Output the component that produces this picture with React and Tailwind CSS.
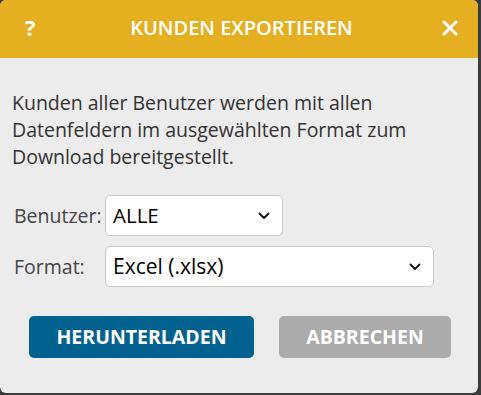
import React from 'react'

function Chevron(){
  return (
    <svg width="12" height="8" viewBox="0 0 12 8" className="pointer-events-none absolute right-[12px] top-1/2 -translate-y-1/2">
      <path d="M1.5 1.5 L6 6 L10.5 1.5" fill="none" stroke="#111" strokeWidth="1.8" strokeLinecap="round" strokeLinejoin="round" />
    </svg>
  )
}

function SelectBox({value, width, size}){
  return (
    <div className={`relative h-[41px] rounded-[5px] border border-[#c9c9c9] bg-white pl-[7px] flex items-center text-black ${size} ${width}`}>
      <span>{value}</span>
      <Chevron />
    </div>
  )
}

export default function App(){
  return (
    <div className="w-[481px] h-[395px] bg-[#3b3b3b] font-['Open_Sans',sans-serif]">
      <div className="w-[478px] h-[393px] rounded-[6px] overflow-hidden bg-[#ececec] flex flex-col">
        <div className="h-[58px] bg-[#e5af22] flex items-center justify-between pl-[25px] pr-[20px] pb-[3px] text-white">
          <span className="text-[22px] font-bold w-[24px]">?</span>
          <span className="text-[20px] font-semibold">KUNDEN EXPORTIEREN</span>
          <div className="w-[24px] flex justify-end">
            <svg width="16" height="16" viewBox="0 0 16 16">
              <path d="M2 2 L14 14 M14 2 L2 14" stroke="white" strokeWidth="3" strokeLinecap="round" />
            </svg>
          </div>
        </div>
        <div className="flex-1 px-[12px] pt-[31px]">
          <p className="text-[19.5px] leading-[27px] text-[#333]">
            Kunden aller Benutzer werden mit allen<br />
            Datenfeldern im ausgewählten Format zum<br />
            Download bereitgestellt.
          </p>
          <div className="mt-[25px] flex items-center">
            <span className="w-[93px] pl-[2px] text-[19.5px] text-[#444]">Benutzer:</span>
            <SelectBox value="ALLE" width="w-[178px]" size="text-[20.5px]" />
          </div>
          <div className="mt-[10px] flex items-center">
            <span className="w-[93px] pl-[2px] text-[19.5px] text-[#444]">Format:</span>
            <SelectBox value="Excel (.xlsx)" width="w-[329px]" size="text-[21px]" />
          </div>
          <div className="mt-[29px] flex gap-[25px] pl-[17px]">
            <button className="h-[42px] w-[225px] rounded-[5px] bg-[#02628f] text-white text-[19.5px] font-bold">HERUNTERLADEN</button>
            <button className="h-[42px] w-[172px] rounded-[5px] bg-[#ababab] text-white text-[19.5px] font-bold">ABBRECHEN</button>
          </div>
        </div>
      </div>
    </div>
  )
}
